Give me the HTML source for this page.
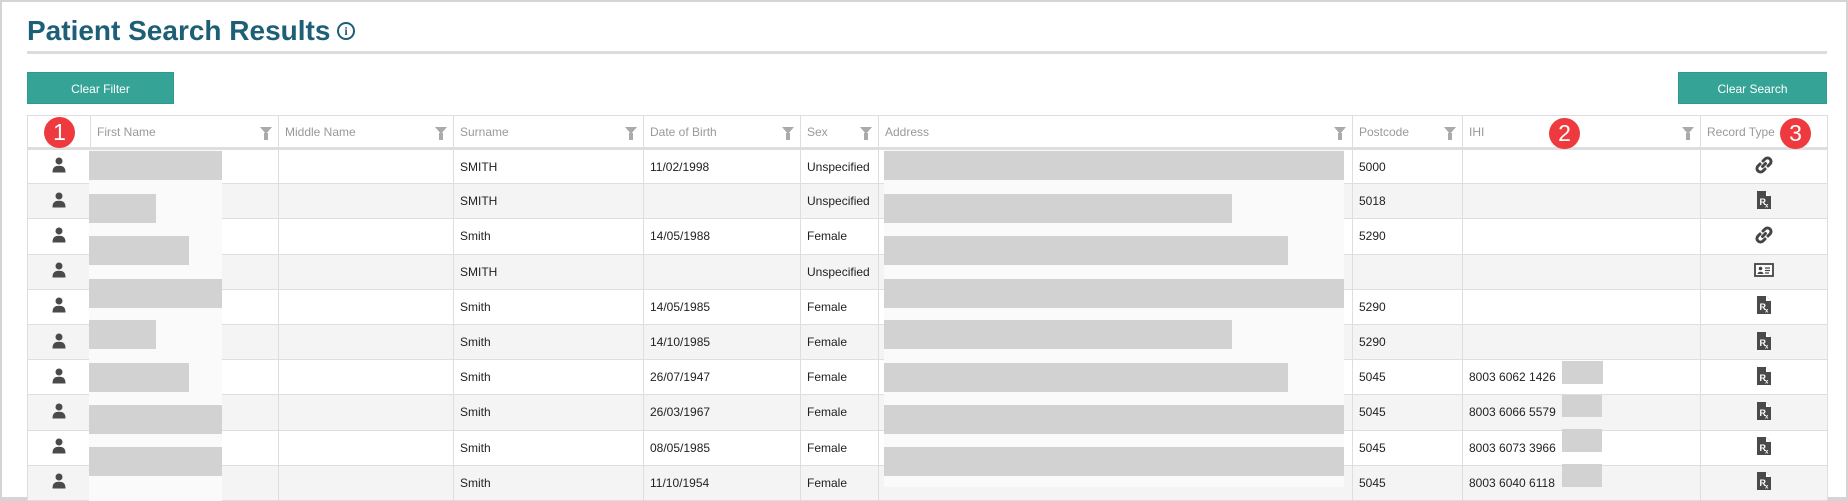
<!DOCTYPE html>
<html><head><meta charset="utf-8"><style>
*{box-sizing:border-box;margin:0;padding:0}
body{width:1848px;height:501px;background:#fff;font-family:"Liberation Sans",Arial,sans-serif;position:relative;overflow:hidden}
.frame{position:absolute;left:0;top:0;width:1848px;height:501px;border:2px solid #d4d4d4;border-bottom:4px solid #d4d4d4}
h1{position:absolute;left:27px;top:15px;font-size:28px;font-weight:bold;color:#1d5f76;white-space:nowrap}
.info{position:absolute;left:337px;top:22px;width:18px;height:18px;border:2px solid #1d5f76;border-radius:50%;color:#1d5f76;font:bold 12px "Liberation Serif",serif;text-align:center;line-height:14px}
.hr{position:absolute;left:27px;top:51px;width:1800px;height:3px;background:#dcdcdc}
.btn{position:absolute;top:72px;height:32px;background:#35a497;color:#fff;font-size:12px;text-align:center;line-height:32px;border:1px solid #2f9a8d}
table{position:absolute;left:27px;top:115px;width:1800px;border-collapse:collapse;table-layout:fixed;font-size:12px;color:#222}
td,th{border:1px solid #dedede;height:35.2px;padding:0 6px;white-space:nowrap;overflow:hidden;text-align:left;font-weight:normal}
th{height:33px;color:#999;border-bottom:3px solid #dedede;position:relative}
th .f{position:absolute;right:6px;top:11px;width:0;height:0;border-left:6px solid transparent;border-right:6px solid transparent;border-top:7px solid #aaa}
th .f:after{content:"";position:absolute;left:-2px;top:-1px;width:4px;height:7px;background:#aaa}
tr:nth-child(odd) td{background:#f4f4f4}
td.c{text-align:center;padding:0}
.badge{position:absolute;width:31px;height:31px;border-radius:50%;background:#ee3a3f;color:#fff;font-size:23px;text-align:center;line-height:31px}
.pale{position:absolute;background:#fafafa}
.g{position:absolute;background:#d2d2d2}
</style></head><body>
<div class="frame"></div>
<h1>Patient Search Results</h1>
<div class="info">i</div>
<div class="hr"></div>
<div class="btn" style="left:27px;width:147px">Clear Filter</div>
<div class="btn" style="left:1678px;width:149px">Clear Search</div>
<svg width="0" height="0" style="position:absolute"><defs>
<symbol id="p" viewBox="0 0 14 16"><circle cx="7" cy="4" r="3.5" fill="#4a4a4a"/><path d="M0.5 15.5 C0.5 10 3 8.7 7 8.7 C11 8.7 13.5 10 13.5 15.5Z" fill="#4a4a4a"/></symbol>
<symbol id="rx" viewBox="0 0 14 18"><path d="M0 0H9L14 5V18H0Z" fill="#4a4a4a"/><path d="M9 0V5H14" fill="#fff"/><text x="2.5" y="14" font-size="9" font-weight="bold" fill="#fff" font-family="Liberation Sans">R</text><text x="8" y="16.5" font-size="6" font-weight="bold" fill="#fff" font-family="Liberation Sans">x</text></symbol>
<symbol id="lk" viewBox="0 0 18 18"><g fill="none" stroke="#444" stroke-width="3" stroke-linecap="round"><path d="M7.5 10.5 L10.5 7.5"/><path d="M8 5 L10 3 A3.2 3.2 0 0 1 15 8 L13 10"/><path d="M10 13 L8 15 A3.2 3.2 0 0 1 3 10 L5 8"/></g></symbol>
<symbol id="card" viewBox="0 0 20 14"><rect x="1" y="1" width="18" height="12" fill="#fff" stroke="#444" stroke-width="1.8"/><circle cx="6.5" cy="5.5" r="1.8" fill="#444"/><path d="M3.5 11 C3.5 8 9.5 8 9.5 11Z" fill="#444"/><path d="M11 5h5M11 7.5h5M11 10h4" stroke="#444" stroke-width="1.3"/></symbol>
</defs></svg>
<table>
<colgroup><col style="width:63px"><col style="width:188px"><col style="width:175px"><col style="width:190px"><col style="width:157px"><col style="width:78px"><col style="width:474px"><col style="width:110px"><col style="width:238px"><col style="width:127px"></colgroup>
<tr><th></th><th>First Name<i class="f"></i></th><th>Middle Name<i class="f"></i></th><th>Surname<i class="f"></i></th><th>Date of Birth<i class="f"></i></th><th>Sex<i class="f"></i></th><th>Address<i class="f"></i></th><th>Postcode<i class="f"></i></th><th>IHI<i class="f"></i></th><th>Record Type</th></tr>
<tr><td class="c"><svg width="14" height="16"><use href="#p"/></svg></td><td></td><td></td><td>SMITH</td><td>11/02/1998</td><td>Unspecified</td><td></td><td>5000</td><td></td><td class="c"><svg width="18" height="18"><use href="#lk"/></svg></td></tr>
<tr><td class="c"><svg width="14" height="16"><use href="#p"/></svg></td><td></td><td></td><td>SMITH</td><td></td><td>Unspecified</td><td></td><td>5018</td><td></td><td class="c"><svg width="14" height="18"><use href="#rx"/></svg></td></tr>
<tr><td class="c"><svg width="14" height="16"><use href="#p"/></svg></td><td></td><td></td><td>Smith</td><td>14/05/1988</td><td>Female</td><td></td><td>5290</td><td></td><td class="c"><svg width="18" height="18"><use href="#lk"/></svg></td></tr>
<tr><td class="c"><svg width="14" height="16"><use href="#p"/></svg></td><td></td><td></td><td>SMITH</td><td></td><td>Unspecified</td><td></td><td></td><td></td><td class="c"><svg width="20" height="14"><use href="#card"/></svg></td></tr>
<tr><td class="c"><svg width="14" height="16"><use href="#p"/></svg></td><td></td><td></td><td>Smith</td><td>14/05/1985</td><td>Female</td><td></td><td>5290</td><td></td><td class="c"><svg width="14" height="18"><use href="#rx"/></svg></td></tr>
<tr><td class="c"><svg width="14" height="16"><use href="#p"/></svg></td><td></td><td></td><td>Smith</td><td>14/10/1985</td><td>Female</td><td></td><td>5290</td><td></td><td class="c"><svg width="14" height="18"><use href="#rx"/></svg></td></tr>
<tr><td class="c"><svg width="14" height="16"><use href="#p"/></svg></td><td></td><td></td><td>Smith</td><td>26/07/1947</td><td>Female</td><td></td><td>5045</td><td>8003 6062 1426</td><td class="c"><svg width="14" height="18"><use href="#rx"/></svg></td></tr>
<tr><td class="c"><svg width="14" height="16"><use href="#p"/></svg></td><td></td><td></td><td>Smith</td><td>26/03/1967</td><td>Female</td><td></td><td>5045</td><td>8003 6066 5579</td><td class="c"><svg width="14" height="18"><use href="#rx"/></svg></td></tr>
<tr><td class="c"><svg width="14" height="16"><use href="#p"/></svg></td><td></td><td></td><td>Smith</td><td>08/05/1985</td><td>Female</td><td></td><td>5045</td><td>8003 6073 3966</td><td class="c"><svg width="14" height="18"><use href="#rx"/></svg></td></tr>
<tr><td class="c"><svg width="14" height="16"><use href="#p"/></svg></td><td></td><td></td><td>Smith</td><td>11/10/1954</td><td>Female</td><td></td><td>5045</td><td>8003 6040 6118</td><td class="c"><svg width="14" height="18"><use href="#rx"/></svg></td></tr>
</table>
<div class="pale" style="left:89px;top:150px;width:133px;height:351px"></div>
<div class="g" style="left:89px;top:151px;width:133px;height:29px"></div>
<div class="g" style="left:89px;top:194px;width:67px;height:29px"></div>
<div class="g" style="left:89px;top:236px;width:100px;height:29px"></div>
<div class="g" style="left:89px;top:279px;width:133px;height:29px"></div>
<div class="g" style="left:89px;top:320px;width:67px;height:29px"></div>
<div class="g" style="left:89px;top:363px;width:100px;height:29px"></div>
<div class="g" style="left:89px;top:405px;width:133px;height:29px"></div>
<div class="g" style="left:89px;top:447px;width:133px;height:29px"></div>
<div class="pale" style="left:884px;top:150px;width:460px;height:337px"></div>
<div class="g" style="left:884px;top:151px;width:460px;height:29px"></div>
<div class="g" style="left:884px;top:194px;width:348px;height:29px"></div>
<div class="g" style="left:884px;top:236px;width:404px;height:29px"></div>
<div class="g" style="left:884px;top:279px;width:460px;height:29px"></div>
<div class="g" style="left:884px;top:320px;width:348px;height:29px"></div>
<div class="g" style="left:884px;top:363px;width:404px;height:29px"></div>
<div class="g" style="left:884px;top:405px;width:460px;height:29px"></div>
<div class="g" style="left:884px;top:447px;width:460px;height:29px"></div>
<div class="g" style="left:1562px;top:361px;width:41px;height:23px"></div>
<div class="g" style="left:1562px;top:395px;width:40px;height:22px"></div>
<div class="g" style="left:1562px;top:429px;width:40px;height:23px"></div>
<div class="g" style="left:1562px;top:464px;width:40px;height:23px"></div>
<div class="badge" style="left:44px;top:117px">1</div>
<div class="badge" style="left:1549px;top:118px">2</div>
<div class="badge" style="left:1780px;top:118px">3</div>
</body></html>
